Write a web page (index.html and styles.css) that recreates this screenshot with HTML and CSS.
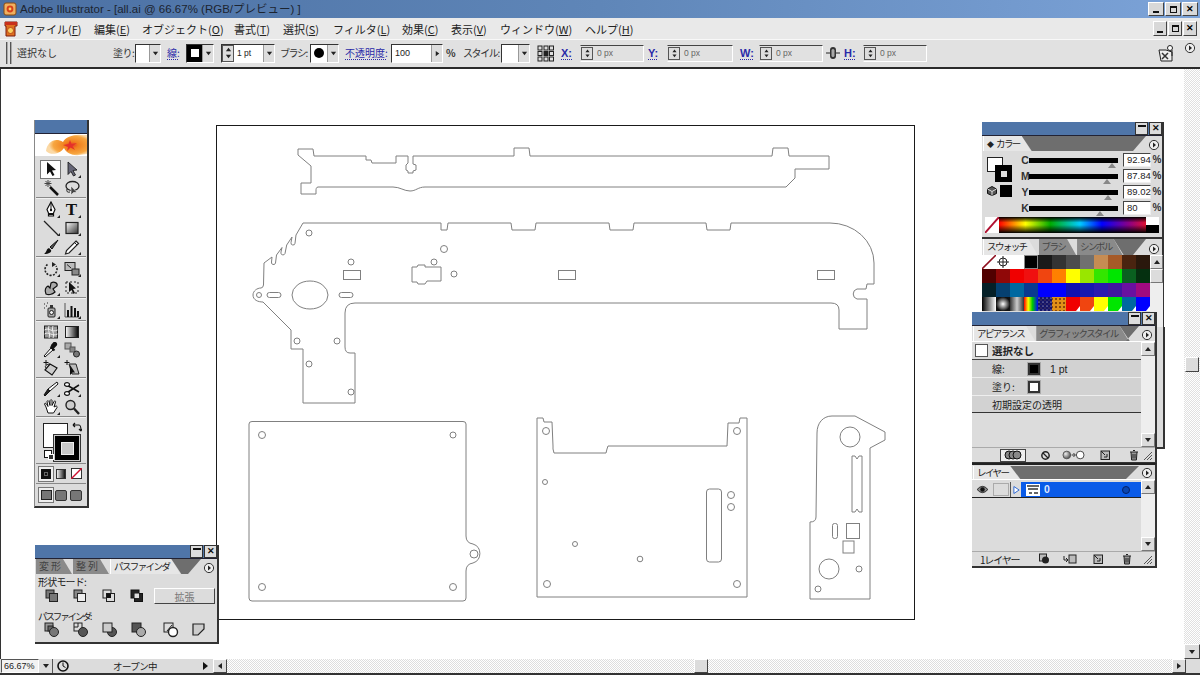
FILE: index.html
```html
<!DOCTYPE html>
<html lang="ja">
<head>
<meta charset="utf-8">
<title>Adobe Illustrator</title>
<link rel="stylesheet" href="styles.css">
</head>
<body>
<svg class="defs" width="0" height="0">
  <defs>
    <linearGradient id="gGrey" x1="0" y1="0" x2="1" y2="1"><stop offset="0" stop-color="#fff"/><stop offset="1" stop-color="#333"/></linearGradient>
    <linearGradient id="gH" x1="0" y1="0" x2="1" y2="0"><stop offset="0" stop-color="#fff"/><stop offset="1" stop-color="#000"/></linearGradient>
    <radialGradient id="gBall" cx=".35" cy=".35" r=".8"><stop offset="0" stop-color="#eee"/><stop offset="1" stop-color="#333"/></radialGradient>
    <radialGradient id="gFlower" cx=".62" cy=".5" r=".55"><stop offset="0" stop-color="#e8322a"/><stop offset=".3" stop-color="#f0801e"/><stop offset=".8" stop-color="#f7a640"/><stop offset="1" stop-color="#fbd9a6"/></radialGradient>
    <symbol id="up" viewBox="0 0 8 8"><path d="M4 2 L7 6 H1 Z" fill="#222"/></symbol>
    <symbol id="down" viewBox="0 0 8 8"><path d="M1 2 H7 L4 6 Z" fill="#222"/></symbol>
    <symbol id="menuDot" viewBox="0 0 12 12"><circle cx="6" cy="6" r="4.6" fill="#eee" stroke="#333"/><path d="M5 3.5 L8 6 L5 8.5 Z" fill="#222"/></symbol>
    <symbol id="trash" viewBox="0 0 12 12"><path d="M2 3 H10 M5 1.5 H7 M3 3 L3.6 11 H8.4 L9 3" fill="#999" stroke="#222"/><path d="M5 5 V9.5 M7 5 V9.5" stroke="#222"/></symbol>
    <symbol id="newl" viewBox="0 0 12 12"><rect x="2" y="2" width="8.5" height="8.5" fill="#bbb" stroke="#222"/><path d="M2 2 L6 6 M5 8 L8 8 L8 5" stroke="#222" fill="none"/></symbol>
    <symbol id="grip" viewBox="0 0 12 12"><path d="M11 3 L3 11 M11 6 L6 11 M11 9 L9 11" stroke="#555" fill="none"/></symbol>
  </defs>
</svg>
<div class="app">
  <header class="titlebar">
    <svg class="app-icon" viewBox="0 0 14 14" width="14" height="14"><rect x="1" y="1" width="12" height="12" rx="2" fill="#f0b060" stroke="#8a4a10"/><circle cx="7" cy="7" r="3.4" fill="#d8401c"/><circle cx="7" cy="7" r="1.4" fill="#ffd060"/></svg>
    <span class="title-text">Adobe Illustrator - [all.ai @ 66.67% (RGB/プレビュー) ]</span>
    <div class="winbtns">
      <button class="wbtn"><span class="g-min"></span></button>
      <button class="wbtn"><span class="g-res"></span></button>
      <button class="wbtn">✕</button>
    </div>
  </header>
  <nav class="menubar">
    <svg class="doc-icon" viewBox="0 0 16 18" width="16" height="18"><path d="M2 2 H14 V6 H12 V16 H3 V6 H2 Z" fill="#e07020" stroke="#7a1c10"/><rect x="2" y="2" width="12" height="3" fill="#c8301c"/><circle cx="7.5" cy="10.5" r="3" fill="#fad060" stroke="#a83010" stroke-width=".7"/></svg>
    <ul class="menus">
      <li class="m1">ファイル(<u>F</u>)</li>
      <li class="m2">編集(<u>E</u>)</li>
      <li class="m3">オブジェクト(<u>O</u>)</li>
      <li class="m4">書式(<u>T</u>)</li>
      <li class="m5">選択(<u>S</u>)</li>
      <li class="m6">フィルタ(<u>L</u>)</li>
      <li class="m7">効果(<u>C</u>)</li>
      <li class="m8">表示(<u>V</u>)</li>
      <li class="m9">ウィンドウ(<u>W</u>)</li>
      <li class="m10">ヘルプ(<u>H</u>)</li>
    </ul>
    <div class="winbtns docbtns">
      <button class="wbtn"><span class="g-min"></span></button>
      <button class="wbtn"><span class="g-res"></span></button>
      <button class="wbtn">✕</button>
    </div>
  </nav>
  <div class="controlbar">
    <div class="grips"><i></i><i></i></div>
    <span class="lbl w96">選択なし</span>
    <span class="lbl tight w22">塗り:</span>
    <div class="combo w26"><span class="sw sw-white"></span><span class="drop"><svg width="7" height="7"><use href="#down"/></svg></span></div>
    <span class="lbl link ml6 w19">線:</span>
    <div class="combo w28"><span class="sw sw-stroke"><b></b></span><span class="drop"><svg width="7" height="7"><use href="#down"/></svg></span></div>
    <div class="combo ml7 w54">
      <span class="spin"><svg width="7" height="7"><use href="#up"/></svg><svg width="7" height="7"><use href="#down"/></svg></span>
      <span class="val">1 pt</span><span class="drop"><svg width="7" height="7"><use href="#down"/></svg></span>
    </div>
    <span class="lbl kana ml5 w30">ブラシ:</span>
    <div class="combo w29"><span class="sw sw-white sw-dot"><b></b></span><span class="drop"><svg width="7" height="7"><use href="#down"/></svg></span></div>
    <span class="lbl link ml6 w46">不透明度:</span>
    <div class="combo w52"><span class="val val-op">100</span><span class="drop"><svg width="7" height="7"><use href="#up" class="rot"/></svg></span></div>
    <span class="lbl pct ml3 w17">%</span>
    <span class="lbl kana w38">スタイル:</span>
    <div class="combo w29"><span class="sw sw-white"></span><span class="drop"><svg width="7" height="7"><use href="#down"/></svg></span></div>
    <svg class="ml7 w17" viewBox="0 0 17 17" height="17"><g fill="#ddd" stroke="#222"><rect x="1" y="1" width="4" height="4"/><rect x="7" y="1" width="4" height="4"/><rect x="12.5" y="1" width="4" height="4"/><rect x="1" y="6.5" width="4" height="4"/><rect x="7" y="6.5" width="4" height="4" fill="#222"/><rect x="12.5" y="6.5" width="4" height="4"/><rect x="1" y="12" width="4" height="4"/><rect x="7" y="12" width="4" height="4"/><rect x="12.5" y="12" width="4" height="4"/></g></svg>
    <span class="lbl link bold ml7 w19">X:</span>
    <div class="field w64"><span class="spin"><svg width="7" height="7"><use href="#up"/></svg><svg width="7" height="7"><use href="#down"/></svg></span><span class="px">0 px</span></div>
    <span class="lbl link bold ml4 w19">Y:</span>
    <div class="field w66"><span class="spin"><svg width="7" height="7"><use href="#up"/></svg><svg width="7" height="7"><use href="#down"/></svg></span><span class="px">0 px</span></div>
    <span class="lbl link bold ml7 w19">W:</span>
    <div class="field w64"><span class="spin"><svg width="7" height="7"><use href="#up"/></svg><svg width="7" height="7"><use href="#down"/></svg></span><span class="px">0 px</span></div>
    <svg class="ml3 w14" viewBox="0 0 14 14" height="14"><path d="M0 7 H14" stroke="#222"/><rect x="4" y="1" width="6" height="12" rx="3" fill="#333"/><rect x="5.5" y="3" width="3" height="8" rx="1.5" fill="#aaa"/></svg>
    <span class="lbl link bold ml4 w19">H:</span>
    <div class="field w64"><span class="spin"><svg width="7" height="7"><use href="#up"/></svg><svg width="7" height="7"><use href="#down"/></svg></span><span class="px">0 px</span></div>
    <svg class="tb-doc" viewBox="0 0 18 18" width="18" height="18"><path d="M2 6 H9 L15 8 V17 H4 Z" fill="#eee" stroke="#222"/><path d="M5 9 L11 15 M5 15 L11 9" stroke="#333" stroke-width="1.5"/><circle cx="13" cy="4" r="2.5" fill="#fff" stroke="#222"/><path d="M15 6 V12" stroke="#222"/></svg>
    <svg class="tb-menu" width="12" height="12"><use href="#menuDot"/></svg>
  </div>
  <div class="workarea">
    <main class="canvas">
      <svg class="drawing" viewBox="0 69 1184 590" width="1184" height="590">
        <rect class="artboard" x="216.5" y="125.5" width="698" height="494"/>
        <g class="cut">
          <path d="M298 149 H313 L314 156 H366 V160 H371 L372 163 H396 V156 H408 V163 L406 165 V170 L408 171 V173 H413 V171 L416 170 V165 L413 164 V156 H514 V148 H529 L530 156 H772 L773 148 H788 L789 156 H829 V169 H795 V178 L786 187 H425 C418 187 416 191 410 191 C404 191 400 187 393 187 H318 C316 187 316 190 316 190 V194 H301 V183 H311 V166 L298 155 Z"/>
          <path d="M303 223 H441 V230 H447 L448 223 H511 L512 230 H535 L536 223 H609 L610 230 H633 L634 223 H706 L707 230 H730 L731 223 H830 A44 40 0 0 1 874 263 V284 H867 L866 289 H857 A5.2 5.2 0 0 0 857 299 H867 V329 H839 V310 Q839 303 831 303 H355 Q345 303 345 313 V347 Q345 353 350 353 H355 V403 H303 V349 H291 V330 L263 302 C258 302 253 300 253 295 C253 291 257 288 261 288 Q263 288 263.500 285 L264 263 L272 257 L271.500 262 A2 2 0 0 0 275.500 263 L276.500 255 L282 247.500 L281 252 A2 2 0 0 0 285 253.500 L286.700 245 L292 237 L291 242.700 A2 2 0 0 0 295 243.300 L296 235 Z"/>
          <path d="M412 267 H417 L418 265 H425 V267 H441 V281 H427 L425 284 H418 L417 282 H412 Z"/>
          <rect x="343.500" y="270.500" width="17" height="9"/>
          <rect x="558.500" y="270.500" width="17" height="9"/>
          <rect x="817.500" y="270.500" width="17" height="9"/>
          <ellipse cx="310" cy="295" rx="18" ry="14"/>
          <rect x="267" y="292.500" width="14" height="5" rx="2.500"/>
          <rect x="339" y="292.500" width="14" height="5" rx="2.500"/>
          <circle cx="259" cy="295" r="2.500"/><circle cx="309" cy="233" r="3"/><circle cx="444" cy="249" r="3.500"/><circle cx="434" cy="262" r="3"/><circle cx="454" cy="274" r="3"/><circle cx="351" cy="262" r="3"/><circle cx="297" cy="341" r="3"/><circle cx="337" cy="341" r="3"/><circle cx="309" cy="364" r="3"/><circle cx="351" cy="392" r="3"/>
          <path d="M252 421.500 H463 Q466 421.500 466 424 V536 Q466 543 473 544 A10 10 0 0 1 473 563 Q466 564 466 571 V598 Q466 601 463 601 H252 Q249 601 249 598 V424 Q249 421.500 252 421.500 Z"/>
          <circle cx="474" cy="554" r="4"/><circle cx="262" cy="435" r="3.500"/><circle cx="453" cy="435" r="3"/><circle cx="262" cy="587" r="3.500"/><circle cx="453" cy="587" r="3.500"/>
          <path d="M537 418 H543 L544 422 H552 L553 446 L553 449 L554 453 H606 L607 449 L608 446 H727 L728 423 H739 L740 418 H747 V597 H537 Z"/>
          <circle cx="546" cy="431" r="3.500"/><circle cx="737" cy="431" r="3.500"/><circle cx="545" cy="482" r="2.500"/><circle cx="575" cy="544" r="2.500"/><circle cx="640" cy="559" r="2.800"/><circle cx="547" cy="584" r="3.500"/><circle cx="737" cy="584" r="3.500"/><circle cx="731" cy="495" r="3.500"/><circle cx="731" cy="507" r="3.500"/>
          <rect x="706.500" y="489" width="15" height="73" rx="3"/>
          <path d="M817 433 C817 423 823 416 832 416 H855 L885 432 V440 L870 448 V599 H810 V522 Q816 522 816 517 Z"/>
          <circle cx="850" cy="437" r="10"/><circle cx="829" cy="569" r="10"/><circle cx="859" cy="569" r="3"/><circle cx="818" cy="589" r="3"/>
          <path d="M852 456 L855 456 L857 459 L859 456 L862 456 V512 H859 L857 509 L855 512 H852 Z"/>
          <rect x="832.500" y="523.500" width="5" height="15" rx="2"/>
          <rect x="846.500" y="523.500" width="13" height="15"/>
          <rect x="843" y="541" width="11" height="12"/>
        </g>
      </svg>
    </main>
    <div class="vscroll">
      <span class="vthumb"></span>
      <span class="vdown"><svg width="8" height="8"><use href="#down"/></svg></span>
    </div>
    <section class="panel tools">
      <div class="ptitle"></div>
      <div class="tool-logo"><svg viewBox="0 0 52 22" width="52" height="22" preserveAspectRatio="none"><rect width="52" height="22" fill="#fff"/><path d="M11 17 C12 8 20 3 28 8 C30 3 40 0 46 1 L52 1 V20 L44 21 C38 22 31 19 29 14 C25 20 16 22 11 17 Z" fill="url(#gFlower)"/><path d="M35 6 L36.500 10 L42 9 L37.500 12 L40 16 L35.500 13.500 L32 17 L33 13 L28 11 L33.500 10 Z" fill="#e5322a"/></svg></div>
      <div class="tgroup g1">
        <span class="t on"><svg viewBox="0 0 16 16"><path d="M4 1 V13.500 L7 10.500 L9.500 15 L11.500 14 L9 9.500 L13 9 Z" fill="#111"/></svg></span>
        <span class="t fly"><svg viewBox="0 0 16 16"><path d="M4 1 V13.500 L7 10.500 L9.500 15 L11.500 14 L9 9.500 L13 9 Z" fill="#667" stroke="#111" stroke-width=".8"/></svg></span>
        <span class="t"><svg viewBox="0 0 16 16"><path d="M7 7 L15 15" stroke="#111" stroke-width="2.500"/><path d="M5 0 V7 M1.500 3.500 H8.500 M2.500 1 L7.500 6 M7.500 1 L2.500 6" stroke="#444"/></svg></span>
        <span class="t"><svg viewBox="0 0 16 16"><ellipse cx="8.500" cy="6" rx="6.500" ry="4.500" fill="none" stroke="#222" stroke-width="1.300"/><path d="M3 9 Q2 13 6 12" fill="none" stroke="#222"/><path d="M7 6 V15 L9.500 12.500 H13 Z" fill="#444" stroke="#fff" stroke-width=".5"/></svg></span>
      </div>
      <div class="tgroup g2">
        <span class="t fly"><svg viewBox="0 0 16 16"><path d="M8 1 L12 8.500 L10.500 12 V15 H5.500 V12 L4 8.500 Z" fill="#fff" stroke="#111" stroke-width="1.200"/><path d="M8 1 V8" stroke="#111"/><circle cx="8" cy="9" r="1.200" fill="#111"/><path d="M5.500 13 H10.500" stroke="#111" stroke-width="2"/></svg></span>
        <span class="t fly t-type">T</span>
        <span class="t fly"><svg viewBox="0 0 16 16"><path d="M1 1 L15 15" stroke="#222" stroke-width="1.300"/></svg></span>
        <span class="t fly"><svg viewBox="0 0 16 16"><rect x="2" y="2.500" width="12" height="11" fill="url(#gGrey)" stroke="#222" stroke-width="1.200"/></svg></span>
        <span class="t"><svg viewBox="0 0 16 16"><path d="M15 1 L7 8 L9 10 Z" fill="#555" stroke="#111"/><path d="M6 9 C3 10 4 13 1 15 C6 15 9 13 8 11 Z" fill="#111"/></svg></span>
        <span class="t fly"><svg viewBox="0 0 16 16"><path d="M12 2 L14.500 4.500 L5 14 L1.500 15 L2.500 11.500 Z" fill="#fff" stroke="#222" stroke-width="1.200"/><path d="M10.500 3.500 L13 6" stroke="#222"/></svg></span>
      </div>
      <div class="tgroup g3">
        <span class="t fly"><svg viewBox="0 0 16 16"><path d="M4.500 3.500 A6 6 0 1 0 13 5" fill="none" stroke="#222" stroke-width="1.600" stroke-dasharray="2 1.300"/><path d="M9 1 L13 3.500 L9 6 Z" fill="#222"/></svg></span>
        <span class="t fly"><svg viewBox="0 0 16 16"><rect x="1" y="1.500" width="10" height="8" fill="#bbb" stroke="#222"/><rect x="8" y="8" width="7" height="6" fill="#888" stroke="#222"/><path d="M3 3.500 L7 7" stroke="#222"/></svg></span>
        <span class="t fly"><svg viewBox="0 0 16 16"><path d="M3 14 C1 10 3 7 5 6 L7 8 L8 3 C11 1 15 3 14 6 L10 9 L12 12 C9 15 5 15 3 14 Z" fill="#aaa" stroke="#111" stroke-width="1.200"/></svg></span>
        <span class="t"><svg viewBox="0 0 16 16"><rect x="2" y="2" width="12" height="11" fill="none" stroke="#222" stroke-dasharray="2 2"/><path d="M5 2 V12 L7.500 10 L9.500 14 L11 13 L9 9 L12 8.500 Z" fill="#111"/></svg></span>
      </div>
      <div class="tgroup g4">
        <span class="t fly"><svg viewBox="0 0 16 16"><rect x="5" y="6" width="7" height="9" rx="1" fill="#aaa" stroke="#222"/><rect x="7" y="3" width="3" height="3" fill="#333"/><circle cx="8.500" cy="10.500" r="2" fill="#eee" stroke="#222"/><path d="M1 2 H2 M3 4 H4 M1 6 H2 M4 1 H5" stroke="#222"/></svg></span>
        <span class="t fly"><svg viewBox="0 0 16 16"><path d="M1 15 V1 M1 15 H15" stroke="#555"/><path d="M3 15 V8 H5 V15 Z M6.500 15 V4 H8.500 V15 Z M10 15 V6 H12 V15 Z M13 15 V9 H15 V15 Z" fill="#111"/></svg></span>
      </div>
      <div class="tgroup g5">
        <span class="t"><svg viewBox="0 0 16 16"><rect x="1.500" y="2" width="13" height="12" fill="#999" stroke="#222"/><path d="M1.500 6 C6 3 9 9 14.500 6 M1.500 10 C6 7 9 13 14.500 10 M6 2 C4 6 8 10 6 14 M10 2 C8 6 12 10 10 14" fill="none" stroke="#eee"/></svg></span>
        <span class="t"><svg viewBox="0 0 16 16"><rect x="1.500" y="2.500" width="13" height="11" fill="url(#gH)" stroke="#222"/></svg></span>
        <span class="t fly"><svg viewBox="0 0 16 16"><path d="M2 15 L1 14 L8 6 L10 8 Z" fill="#fff" stroke="#111"/><path d="M7.500 4.500 L11.500 8.500 M10 6 L13 3 A1.500 1.500 0 0 0 11 1 L8.500 4" fill="#111" stroke="#111" stroke-width="2"/></svg></span>
        <span class="t"><svg viewBox="0 0 16 16"><rect x="1" y="1" width="6" height="6" fill="#aaa" stroke="#555"/><rect x="6" y="5" width="5" height="5" fill="#888" stroke="#555"/><circle cx="12.500" cy="12" r="3" fill="#777" stroke="#222"/></svg></span>
        <span class="t"><svg viewBox="0 0 16 16"><path d="M7 4 L14 8 L9 15 L2 10 Z" fill="#ccc" stroke="#111" stroke-width="1.200"/><path d="M3 8 C1 6 4 4 7 4" fill="none" stroke="#111"/><path d="M3 0 V5 M.5 2.500 H5.500" stroke="#111"/></svg></span>
        <span class="t"><svg viewBox="0 0 16 16"><path d="M5 4 H12 L15 14 H8 Z" fill="#bbb" stroke="#222"/><path d="M6 5 V15 L8.500 12.500 L11 12.500 Z" fill="#111"/><path d="M3 0 V5 M.5 2.500 H5.500" stroke="#111"/></svg></span>
      </div>
      <div class="tgroup g6">
        <span class="t fly"><svg viewBox="0 0 16 16"><path d="M14 1 L15 3 L7 10 L5 8 Z" fill="#fff" stroke="#111"/><path d="M5 8 L7 10 L2 15 L1 14 Z" fill="#222" stroke="#111"/></svg></span>
        <span class="t fly"><svg viewBox="0 0 16 16"><path d="M1 3 L15 11 M1 13 L15 4" stroke="#111" stroke-width="1.500"/><ellipse cx="3" cy="3.500" rx="2.500" ry="1.800" fill="#fff" stroke="#111" stroke-width="1.200"/><ellipse cx="3" cy="12.500" rx="2.500" ry="1.800" fill="#fff" stroke="#111" stroke-width="1.200"/></svg></span>
        <span class="t fly"><svg viewBox="0 0 16 16"><path d="M3 8 L1.500 5 C1.500 4 3 4 3.500 5 L5 7.500 L4 2.500 C4 1.500 5.500 1.500 6 2.500 L7 6.500 V1.500 C7.500 .5 9 .5 9 1.500 V6.500 L11 2.500 C11.500 1.500 13 2 12.500 3 L11 8 L13 7 C14 7 14.500 8 14 8.500 L10.500 14 H5 Z" fill="#fff" stroke="#111"/></svg></span>
        <span class="t"><svg viewBox="0 0 16 16"><circle cx="6.500" cy="6" r="4.500" fill="#ccc" stroke="#222" stroke-width="1.400"/><path d="M10 9.500 L15 15" stroke="#222" stroke-width="2.400"/></svg></span>
      </div>
      <div class="colorbox">
        <span class="cb-fill"></span>
        <span class="cb-stroke"><b></b></span>
        <svg class="cb-swap" viewBox="0 0 10 10" width="10" height="10"><path d="M1 3 H7 Q9 3 9 9 M1 3 L3 1 M1 3 L3 5 M9 9 L7 7 M9 9 L10 7" fill="none" stroke="#111" stroke-width="1.200"/></svg>
        <span class="cb-def"><b></b></span>
      </div>
      <div class="tmodes">
        <span class="tm on"><b class="m-sq"></b></span>
        <span class="tm"><b class="m-grad"></b></span>
        <span class="tm"><svg viewBox="0 0 12 12" width="11" height="11"><rect x=".5" y=".5" width="11" height="11" fill="#fff" stroke="#222"/><path d="M0 12 L12 0" stroke="#d01030" stroke-width="1.600"/></svg></span>
      </div>
      <div class="tmodes tmodes-last">
        <span class="tm on"><b class="m-screen"></b></span>
        <span class="tm"><b class="m-btn"></b></span>
        <span class="tm"><b class="m-btn"></b></span>
      </div>
    </section>
    <section class="panel pathfinder">
      <div class="ptitle"><span class="pbtn pb-min"></span><span class="pbtn">✕</span></div>
      <div class="ptabs">
        <span class="tab off kj">変形</span><span class="tab off kj">整列</span><span class="tab act">パスファインダ</span><span class="tabfill"></span><span class="tabmenu"><svg width="12" height="12"><use href="#menuDot"/></svg></span>
      </div>
      <div class="pf-body">
        <div class="pf-lbl">形状モード:</div>
        <div class="pf-row pf-row1">
          <svg viewBox="0 0 14 14"><rect x="1" y="1" width="8" height="8" fill="#777" stroke="#222"/><rect x="4.500" y="4.500" width="8" height="8" fill="#777" stroke="#222"/></svg>
          <svg viewBox="0 0 14 14"><rect x="1" y="1" width="8" height="8" fill="#888" stroke="#222"/><rect x="4.500" y="4.500" width="8" height="8" fill="#eee" stroke="#222"/></svg>
          <svg viewBox="0 0 14 14"><rect x="1" y="1" width="8" height="8" fill="#ddd" stroke="#222"/><rect x="4.500" y="4.500" width="8" height="8" fill="#ddd" stroke="#222"/><rect x="4.500" y="4.500" width="4.500" height="4.500" fill="#111"/></svg>
          <svg viewBox="0 0 14 14"><rect x="1" y="1" width="8" height="8" fill="#222" stroke="#111"/><rect x="4.500" y="4.500" width="8" height="8" fill="#222" stroke="#111"/><rect x="4.500" y="4.500" width="4.500" height="4.500" fill="#ddd"/></svg>
          <span class="pf-btn">拡張</span>
        </div>
        <div class="pf-lbl pf-lbl2">パスファインダ:</div>
        <div class="pf-row pf-row2">
          <svg viewBox="0 0 16 16"><rect x="1" y="1" width="8" height="8" fill="#999" stroke="#222"/><rect x="4" y="4" width="5" height="5" fill="#666" stroke="#222"/><circle cx="10" cy="10" r="4.500" fill="#777" stroke="#222"/></svg>
          <svg viewBox="0 0 16 16"><rect x="1" y="1" width="8" height="8" fill="#ddd" stroke="#222"/><path d="M5 1 V5 H1" fill="none" stroke="#222"/><circle cx="10" cy="10" r="4.500" fill="#555" stroke="#222"/></svg>
          <svg viewBox="0 0 16 16"><circle cx="10" cy="10" r="4.500" fill="#555" stroke="#222"/><rect x="1" y="1" width="9" height="9" fill="#ccc" stroke="#222"/></svg>
          <svg viewBox="0 0 16 16"><rect x="1" y="1" width="9" height="9" fill="#555" stroke="#222"/><circle cx="10" cy="10" r="4.500" fill="#aaa" stroke="#222"/></svg>
          <svg viewBox="0 0 16 16"><rect x="1" y="1" width="9" height="9" fill="#ddd" stroke="#222"/><circle cx="10" cy="10" r="4.500" fill="#fff" stroke="#222" stroke-width="1.400"/><path d="M4 9 L9 3" stroke="#222"/></svg>
          <svg viewBox="0 0 16 16"><path d="M2 2 H13 V7 L7 13 H2 Z" fill="#ccc" stroke="#222" stroke-width="1.200"/></svg>
        </div>
      </div>
    </section>
    <section class="panel color">
      <div class="ptitle"><span class="pbtn pb-min"></span><span class="pbtn">✕</span></div>
      <div class="ptabs">
        <span class="tab act"><i class="diamond">◆</i>カラー</span><span class="tabfill"></span><span class="tabmenu"><svg width="12" height="12"><use href="#menuDot"/></svg></span>
      </div>
      <div class="color-body">
        <div class="color-left">
          <span class="cl-fill"></span><span class="cl-stroke"><b></b></span>
          <svg class="cl-cube" viewBox="0 0 10 10" width="10" height="10"><path d="M5 .5 L9.500 3 V7.500 L5 9.500 L.5 7.500 V3 Z" fill="#555" stroke="#111"/><path d="M.5 3 L5 5.500 L9.500 3 M5 5.500 V9.500" stroke="#ddd" fill="none"/></svg>
          <span class="cl-black"></span>
        </div>
        <div class="sliders">
          <div class="srow"><b>C</b><span class="track"><i class="tri tri-c"></i></span><span class="num">92.94</span><em>%</em></div>
          <div class="srow"><b>M</b><span class="track"><i class="tri tri-m"></i></span><span class="num">87.84</span><em>%</em></div>
          <div class="srow"><b>Y</b><span class="track"><i class="tri tri-y"></i></span><span class="num">89.02</span><em>%</em></div>
          <div class="srow"><b>K</b><span class="track"><i class="tri tri-k"></i></span><span class="num num-on">80</span><em>%</em></div>
        </div>
      </div>
      <div class="spectrum">
        <svg class="spec-none" viewBox="0 0 14 15" preserveAspectRatio="none"><rect width="14" height="15" fill="#fff"/><path d="M0 15 L14 0" stroke="#b01030" stroke-width="1.800"/></svg>
        <span class="spec-bar"></span>
        <span class="spec-wb"></span>
      </div>
      <div class="ptabs tabs2">
        <span class="tab act">スウォッチ</span><span class="tab off">ブラシ</span><span class="tab off">シンボル</span><span class="tabfill"></span><span class="tabmenu"><svg width="12" height="12"><use href="#menuDot"/></svg></span>
      </div>
      <div class="swatches">
        <svg class="sw-grid" viewBox="0 0 168 56" width="168" height="56">
          <defs>
            <linearGradient id="s1"><stop offset="0" stop-color="#000"/><stop offset="1" stop-color="#fff"/></linearGradient>
            <radialGradient id="s2"><stop offset="0" stop-color="#fff"/><stop offset="1" stop-color="#111"/></radialGradient>
            <linearGradient id="s3"><stop offset="0" stop-color="#333"/><stop offset=".5" stop-color="#ccc"/><stop offset="1" stop-color="#333"/></linearGradient>
            <linearGradient id="s4"><stop offset="0" stop-color="#f00"/><stop offset=".3" stop-color="#ff0"/><stop offset=".6" stop-color="#0c0"/><stop offset="1" stop-color="#00f"/></linearGradient>
            <pattern id="s5" width="4" height="4" patternUnits="userSpaceOnUse"><rect width="4" height="4" fill="#14146a"/><circle cx="1" cy="1" r=".6" fill="#eee"/><circle cx="3" cy="3" r=".4" fill="#da3"/></pattern>
            <pattern id="s6" width="4" height="4" patternUnits="userSpaceOnUse"><rect width="4" height="4" fill="#e09018"/><circle cx="2" cy="2" r="1" fill="#6a3008"/></pattern>
          </defs>
          <g>
            <rect x="0" width="14" height="14" fill="#fff"/><path d="M0 14 L14 0" stroke="#901020" stroke-width="1.600"/>
            <rect x="14" width="14" height="14" fill="#fff"/><circle cx="21" cy="7" r="4" fill="none" stroke="#222"/><path d="M15 7 H27 M21 1 V13" stroke="#222"/>
            <rect x="28" width="14" height="14" fill="#fff"/>
            <rect x="42.500" y=".5" width="13" height="13" fill="#000" stroke="#888"/>
            <rect x="56" width="14" height="14" fill="#1a1a1a"/><rect x="70" width="14" height="14" fill="#333"/><rect x="84" width="14" height="14" fill="#4d4d4d"/><rect x="98" width="14" height="14" fill="#707070"/><rect x="112" width="14" height="14" fill="#c68c53"/><rect x="126" width="14" height="14" fill="#a65a28"/><rect x="140" width="14" height="14" fill="#4a2410"/><rect x="154" width="14" height="14" fill="#2a180c"/>
          </g>
          <g transform="translate(0 14)">
            <rect x="0" width="14" height="14" fill="#500000"/><rect x="14" width="14" height="14" fill="#900808"/><rect x="28" width="14" height="14" fill="#f00000"/><rect x="42" width="14" height="14" fill="#f01010"/><rect x="56" width="14" height="14" fill="#f04510"/><rect x="70" width="14" height="14" fill="#ff8000"/><rect x="84" width="14" height="14" fill="#ffff00"/><rect x="98" width="14" height="14" fill="#99e600"/><rect x="112" width="14" height="14" fill="#33e600"/><rect x="126" width="14" height="14" fill="#00e600"/><rect x="140" width="14" height="14" fill="#0a6020"/><rect x="154" width="14" height="14" fill="#053010"/>
          </g>
          <g transform="translate(0 28)">
            <rect x="0" width="14" height="14" fill="#052028"/><rect x="14" width="14" height="14" fill="#064070"/><rect x="28" width="14" height="14" fill="#0068a0"/><rect x="42" width="14" height="14" fill="#0a3a90"/><rect x="56" width="14" height="14" fill="#0000ff"/><rect x="70" width="14" height="14" fill="#0000ff"/><rect x="84" width="14" height="14" fill="#1010b0"/><rect x="98" width="14" height="14" fill="#1818b0"/><rect x="112" width="14" height="14" fill="#2a1ab0"/><rect x="126" width="14" height="14" fill="#4015a0"/><rect x="140" width="14" height="14" fill="#6a10a0"/><rect x="154" width="14" height="14" fill="#a00a80"/>
          </g>
          <g transform="translate(0 42)">
            <rect x="0" width="14" height="14" fill="url(#s1)"/><rect x="14" width="14" height="14" fill="url(#s2)"/><rect x="28" width="14" height="14" fill="url(#s3)"/><rect x="42" width="14" height="14" fill="url(#s4)"/><rect x="56" width="14" height="14" fill="url(#s5)"/><rect x="70" width="14" height="14" fill="url(#s6)"/>
            <rect x="84" width="14" height="14" fill="#f00000"/><path d="M94 14 L98 9 V14 Z" fill="#fff"/>
            <rect x="98" width="14" height="14" fill="#f04510"/><path d="M108 14 L112 9 V14 Z" fill="#fff"/>
            <rect x="112" width="14" height="14" fill="#ffff00"/><path d="M122 14 L126 9 V14 Z" fill="#fff"/>
            <rect x="126" width="14" height="14" fill="#00e600"/><path d="M136 14 L140 9 V14 Z" fill="#fff"/>
            <rect x="140" width="14" height="14" fill="#0068a0"/><path d="M150 14 L154 9 V14 Z" fill="#fff"/>
            <rect x="154" width="14" height="14" fill="#0000ff"/><path d="M164 14 L168 9 V14 Z" fill="#fff"/>
          </g>
        </svg>
        <div class="pscroll">
          <span class="psb"><svg width="8" height="8"><use href="#up"/></svg></span>
          <span class="psthumb"></span>
          <span class="psgap"></span>
          <span class="psb"><svg width="8" height="8"><use href="#down"/></svg></span>
        </div>
      </div>
    </section>
    <section class="panel hidden-panel"></section>
    <section class="panel appearance">
      <div class="ptitle"><span class="pbtn pb-min"></span><span class="pbtn">✕</span></div>
      <div class="ptabs">
        <span class="tab act">アピアランス</span><span class="tab off">グラフィックスタイル</span><span class="tabfill"></span><span class="tabmenu"><svg width="12" height="12"><use href="#menuDot"/></svg></span>
      </div>
      <div class="list-wrap ap-wrap">
        <div class="ap-list">
          <div class="ap-row ap-head"><span class="ap-box"></span><b>選択なし</b></div>
          <div class="ap-row ap-sub"><span class="ap-k">線:</span><span class="ap-sw ap-black"></span><span class="ap-v">1 pt</span></div>
          <div class="ap-row ap-sub"><span class="ap-k">塗り:</span><span class="ap-sw"></span></div>
          <div class="ap-row ap-sub ap-last"><span>初期設定の透明</span></div>
        </div>
        <div class="pscroll">
          <span class="psb"><svg width="8" height="8"><use href="#up"/></svg></span>
          <span class="psgap"></span>
          <span class="psb"><svg width="8" height="8"><use href="#down"/></svg></span>
        </div>
      </div>
      <div class="pfoot">
        <span class="ap-f1"><svg viewBox="0 0 20 10" width="20" height="10"><circle cx="6" cy="5" r="4" fill="#888" stroke="#111"/><circle cx="10" cy="5" r="4" fill="#888" stroke="#111"/><circle cx="14" cy="5" r="4" fill="#888" stroke="#111"/></svg></span>
        <svg class="ap-f2" viewBox="0 0 12 12" width="11" height="11"><circle cx="6" cy="6" r="4" fill="none" stroke="#222" stroke-width="1.600"/><path d="M3 3 L9 9" stroke="#222" stroke-width="1.400"/></svg>
        <svg class="ap-f3" viewBox="0 0 24 12" width="23" height="12"><circle cx="5" cy="6" r="4" fill="url(#gBall)" stroke="#555"/><path d="M10 6 H13 M12 4 L14 6 L12 8" stroke="#222" fill="none"/><circle cx="19" cy="6" r="4" fill="#fff" stroke="#444"/></svg>
        <svg class="ap-f4" width="12" height="12"><use href="#newl"/></svg>
        <svg class="ap-f5" width="12" height="12"><use href="#trash"/></svg>
        <svg class="ap-f6" width="12" height="12"><use href="#grip"/></svg>
      </div>
    </section>
    <section class="panel layers">
      <div class="ptabs">
        <span class="tab act">レイヤー</span><span class="tabfill"></span><span class="tabmenu"><svg width="12" height="12"><use href="#menuDot"/></svg></span>
      </div>
      <div class="list-wrap ly-wrap">
        <div class="ly-list">
          <div class="ly-row">
            <span class="ly-eye"><svg viewBox="0 0 14 10" width="13" height="9"><path d="M1 5 Q7 -2 13 5 Q7 12 1 5 Z" fill="#888" stroke="#222"/><circle cx="7" cy="5" r="2.500" fill="#111"/></svg></span>
            <span class="ly-lock"></span>
            <span class="ly-arrow"><svg viewBox="0 0 8 10" width="7" height="10"><path d="M1 1 L7 5 L1 9 Z" fill="#fff" stroke="#1a5ad0"/></svg></span>
            <span class="ly-main">
              <svg viewBox="0 0 14 12" width="14" height="12"><rect width="14" height="12" fill="#fff"/><path d="M1 2 H13 M2 5 H12 M3 9 H6 M8 9 H12" stroke="#333" stroke-width="1.600"/></svg>
              <b>0</b>
              <i class="ly-dot"></i>
            </span>
          </div>
        </div>
        <div class="pscroll">
          <span class="psb"><svg width="8" height="8"><use href="#up"/></svg></span>
          <span class="psgap"></span>
          <span class="psb"><svg width="8" height="8"><use href="#down"/></svg></span>
        </div>
      </div>
      <div class="pfoot ly-foot">
        <span class="ly-count">1レイヤー</span>
        <svg class="ly-f1" viewBox="0 0 12 12" width="13" height="12"><rect x="1" y="1" width="7" height="7" fill="#bbb" stroke="#222"/><circle cx="7" cy="7" r="3.500" fill="#222"/></svg>
        <svg class="ly-f2" viewBox="0 0 14 12" width="14" height="12"><path d="M1 3 V7 H4 M3 5 L5 7 L3 9" fill="none" stroke="#222"/><rect x="6" y="2" width="7" height="8" fill="#bbb" stroke="#222"/></svg>
        <svg class="ly-f3" width="12" height="12"><use href="#newl"/></svg>
        <svg class="ly-f4" width="12" height="12"><use href="#trash"/></svg>
        <svg class="ly-f5" width="12" height="12"><use href="#grip"/></svg>
      </div>
    </section>
  </div>
  <footer class="statusbar">
    <span class="zoomval">66.67%</span>
    <span class="zoomdrop"><svg width="8" height="8"><use href="#down"/></svg></span>
    <svg class="st-icon" viewBox="0 0 12 12" width="12" height="12"><circle cx="6" cy="6" r="5" fill="#ddd" stroke="#111" stroke-width="1.600"/><path d="M6 2.500 V6 L8.500 7.500" stroke="#111" fill="none"/></svg>
    <span class="st-text">オープン中</span>
    <span class="st-arrow"></span>
    <span class="hbtn"><svg width="8" height="8" class="flip"><use href="#up"/></svg></span>
    <span class="htrack"><span class="hthumb"></span></span>
    <span class="hbtn"><svg width="8" height="8"><use href="#up" class="rot"/></svg></span>
    <span class="corner"></span>
  </footer>
</div>
</body>
</html>
```
FILE: styles.css
```css
* { box-sizing: border-box; margin: 0; padding: 0; }
html, body { width: 1200px; height: 675px; overflow: hidden; background: #fff; }
body { font-family: "Noto Sans CJK JP", "Liberation Sans", sans-serif; font-size: 10px; color: #222; }
.defs { position: absolute; }
button { font: inherit; }
ul { list-style: none; }

.app { display: flex; flex-direction: column; width: 1200px; height: 675px; }

/* Title bar */
.titlebar { flex: none; height: 18px; display: flex; align-items: center; padding-left: 3px; background: linear-gradient(90deg, #4b70a3 0%, #5f86b8 50%, #7ca3d8 100%); }
.app-icon { margin-right: 3px; }
.title-text { font-family: "Liberation Sans", "Noto Sans CJK JP", sans-serif; font-size: 11.5px; color: #1c2430; line-height: 18px; }
.winbtns { margin-left: auto; margin-right: 2px; display: flex; gap: 1px; }
.wbtn { width: 16px; height: 14px; display: flex; align-items: center; justify-content: center; font-size: 9px; font-weight: 700; line-height: 1; color: #000; background: #d8d8d8; border: 1px solid; border-color: #fff #444 #444 #fff; font-family: "Liberation Sans", sans-serif; }
.g-min { width: 6px; height: 2px; background: #111; margin-top: 6px; }
.g-res { width: 7px; height: 7px; border: 1px solid #111; border-top-width: 2px; }

/* Menu bar */
.menubar { flex: none; height: 22px; display: flex; align-items: center; background: #e9e9e9; padding-left: 3px; border-bottom: 1px solid #f8f8f8; }
.doc-icon { flex: none; }
.menus { display: flex; font-size: 11px; line-height: 22px; color: #222; }
.menus li { flex: none; }
.m1 { width: 70px; margin-left: 5px; }
.m2 { width: 48px; }
.m3 { width: 92px; }
.m4 { width: 49px; }
.m5 { width: 50px; }
.m6 { width: 69px; }
.m7 { width: 49px; }
.m8 { width: 49px; }
.m9 { width: 85px; }
.docbtns { margin-right: 3px; }
.docbtns .wbtn { width: 14px; height: 15px; }

/* Control bar */
.controlbar { flex: none; height: 29px; display: flex; align-items: center; padding: 0 0 1px 5px; background: #e1e1e1; border-bottom: 2px solid #2a2a2a; font-size: 10px; position: relative; }
.controlbar > * { flex: none; }
.grips { width: 12px; height: 22px; display: flex; gap: 2px; padding-left: 1px; }
.grips i { width: 2px; height: 22px; background: #555; border-right: 1px solid #aaa; }
.lbl { display: block; line-height: 16px; color: #333; white-space: nowrap; }
.tight { letter-spacing: -.5px; }
.kana { letter-spacing: -1.4px; }
.link { color: #2a2aa8; text-decoration: underline dotted; text-underline-offset: 2px; }
.bold { font-family: "Liberation Sans", sans-serif; font-weight: 700; font-size: 11px; }
.pct { font-weight: 700; }
.w14 { width: 14px; } .w17 { width: 17px; } .w19 { width: 19px; } .w22 { width: 22px; } .w26 { width: 26px; } .w28 { width: 28px; } .w29 { width: 29px; } .w30 { width: 30px; } .w38 { width: 38px; } .w46 { width: 46px; } .w52 { width: 52px; } .w54 { width: 54px; } .w64 { width: 64px; } .w66 { width: 66px; } .w96 { width: 96px; }
.ml3 { margin-left: 3px; } .ml4 { margin-left: 4px; } .ml5 { margin-left: 5px; } .ml6 { margin-left: 6px; } .ml7 { margin-left: 7px; }
.combo { height: 19px; display: flex; align-items: stretch; border: 1px solid; border-color: #333 #fff #fff #333; background: #fff; }
.sw { flex: 1; display: flex; align-items: center; justify-content: center; }
.sw-white { background: #fff; }
.sw-stroke { background: #000; }
.sw-stroke b { width: 8px; height: 8px; background: #fff; }
.sw-dot b { width: 10px; height: 10px; background: #000; border-radius: 50%; }
.drop { width: 11px; flex: none; display: flex; align-items: center; justify-content: center; background: #ddd; border-left: 1px solid #999; margin-left: auto; }
.rot { transform: rotate(90deg); transform-origin: center; transform-box: fill-box; }
.flip { transform: rotate(-90deg); }
.spin { flex: none; width: 12px; display: flex; flex-direction: column; align-items: center; justify-content: center; background: #ddd; border: 1px solid #555; }
.val { flex: 1; padding-left: 3px; font-family: "Liberation Sans", sans-serif; font-size: 8.5px; line-height: 16px; background: #fff; }
.val-op { font-size: 9px; }
.field { height: 17px; display: flex; align-items: stretch; padding: 1px 1px 1px 0; border: 1px solid; border-color: #444 #fff #fff #e0e0e0; background: #e1e1e1; }
.field .spin { margin-right: 4px; }
.px { font-family: "Liberation Sans", sans-serif; font-size: 8.5px; line-height: 13px; color: #666; }
.tb-doc { margin-left: auto; margin-right: 9px; }
.tb-menu { margin-right: 4px; margin-bottom: 10px; }

/* Work area */
.workarea { flex: 1; min-height: 0; display: flex; position: relative; }
.canvas { flex: 1; min-width: 0; background: #fff; border-left: 1px solid #333; }
.drawing { display: block; margin-left: -1px; }
.artboard { fill: none; stroke: #1a1a1a; stroke-width: 1; }
.cut * , .cut { fill: none; stroke: #808080; stroke-width: 1; }
.vscroll { flex: none; width: 16px; display: flex; flex-direction: column; background: repeating-conic-gradient(#fff 0 25%, #e0e0e0 0 50%) 0 0 / 2px 2px; position: relative; }
.vthumb { position: absolute; top: 288px; left: 1px; width: 14px; height: 15px; background: #dcdcdc; border: 1px solid; border-color: #fff #444 #444 #fff; }
.vdown { margin-top: auto; height: 15px; display: flex; align-items: center; justify-content: center; background: #dcdcdc; border: 1px solid; border-color: #fff #444 #444 #fff; }

/* Floating panels */
.panel { position: absolute; display: flex; flex-direction: column; background: #dcdcdc; border-right: 2px solid #333; border-bottom: 2px solid #333; font-size: 10px; }
.ptitle { flex: none; height: 14px; display: flex; justify-content: flex-end; gap: 1px; background: #4f75a8; border-bottom: 1px solid #223; }
.pbtn { width: 13px; height: 13px; display: flex; align-items: center; justify-content: center; background: #dcdcdc; border: 1px solid #333; font: 700 9px/1 "Liberation Sans", sans-serif; color: #111; }
.pb-min { align-items: flex-start; padding-top: 2px; }
.pb-min::before { content: ""; width: 8px; height: 2px; background: #111; }
.ptabs { flex: none; height: 15px; display: flex; align-items: stretch; background: #dcdcdc; line-height: 14px; overflow: hidden; }
.tab { flex: none; padding: 0 11px 0 3px; white-space: nowrap; clip-path: polygon(0 0, calc(100% - 9px) 0, 100% 100%, 0 100%); margin-left: 1px; font-size: 9.5px; letter-spacing: -1.6px; }
.tab.kj { letter-spacing: 2px; font-size: 10px; padding: 0 9px 0 3px; }
.tab.act { background: #e6e6e6; color: #222; border-left: 1px solid #fff; }
.tab.off { background: #8a8a8a; color: #444; }
.diamond { font-style: normal; font-size: 7px; margin-right: 2px; letter-spacing: 0; }
.tabfill { flex: 1; min-width: 0; background: #6e6e6e; clip-path: polygon(0 0, 100% 0, calc(100% - 13px) 100%, 10px 100%); margin-left: -9px; }
.tabmenu { flex: none; width: 16px; display: flex; align-items: flex-end; justify-content: center; }

/* Tools */
.tools { left: 34px; top: 51px; width: 55px; height: 388px; border-left: 1px solid #888; }
.tool-logo { flex: none; height: 22px; }
.tool-logo svg { display: block; }
.tgroup { flex: none; display: grid; grid-template-columns: 21px 21px; justify-content: center; grid-auto-rows: 1fr; margin: 0 1px; padding-top: 2px; border-bottom: 1px solid #888; box-shadow: 0 1px 0 #f0f0f0; }
.g1 { height: 42px; padding-top: 4px; }
.g2 { height: 59px; }
.g3 { height: 41px; }
.g4 { height: 23px; }
.g5 { height: 57px; }
.g6 { height: 39px; }
.t { position: relative; display: flex; align-items: center; justify-content: center; }
.t svg { width: 16px; height: 16px; }
.t.on { background: #fff; border: 1px solid; border-color: #333 #fff #fff #333; outline: 1px solid #777; outline-offset: -1px; }
.t.fly::after { content: ""; position: absolute; right: 1px; bottom: 1px; width: 0; height: 0; border-left: 3px solid transparent; border-bottom: 3px solid #222; }
.t-type { font: 700 17px/1 "Liberation Serif", serif; color: #111; }
.colorbox { flex: none; position: relative; height: 47px; margin: 0 1px; border-bottom: 1px solid #888; }
.cb-fill { position: absolute; left: 7px; top: 6px; width: 25px; height: 25px; background: #fff; border: 1px solid #222; }
.cb-stroke { position: absolute; left: 18px; top: 18px; width: 26px; height: 26px; background: #000; border: 1px solid #ccc; outline: 1px solid #333; display: flex; align-items: center; justify-content: center; }
.cb-stroke b { width: 13px; height: 13px; background: #c8c8c8; border: 1px solid #eee; }
.cb-swap { position: absolute; left: 36px; top: 5px; }
.cb-def { position: absolute; left: 8px; top: 33px; width: 8px; height: 8px; background: #fff; border: 1px solid #111; }
.cb-def b { position: absolute; left: 3px; top: 3px; width: 6px; height: 6px; background: #333; border: 1px solid #fff; }
.tmodes { flex: none; display: flex; justify-content: center; gap: 1px; height: 20px; align-items: center; margin: 0 1px; border-bottom: 1px solid #888; }
.tmodes-last { border-bottom: 0; height: 22px; }
.tm { width: 14px; height: 14px; display: flex; align-items: center; justify-content: center; }
.tm.on { outline: 1px solid #777; background: #eee; }
.tm b { display: block; }
.m-sq { width: 10px; height: 10px; background: #111; border: 3px solid #111; box-shadow: inset 0 0 0 1px #666; }
.m-grad { width: 10px; height: 10px; background: linear-gradient(90deg, #eee, #111); border: 1px solid #333; }
.m-screen { width: 11px; height: 10px; background: #777; border: 1px solid #222; }
.m-btn { width: 12px; height: 11px; background: #777; border: 1px solid #333; border-radius: 2px; }

/* Pathfinder */
.pathfinder { left: 35px; top: 476px; width: 184px; height: 99px; }
.pf-body { flex: 1; padding: 2px 0 0 3px; }
.pf-lbl { line-height: 12px; font-size: 10px; letter-spacing: -.8px; }
.pf-lbl2 { margin-top: 6px; font-size: 9.5px; letter-spacing: -2.1px; }
.pf-row { display: flex; align-items: center; height: 16px; position: relative; }
.pf-row1 svg { width: 14px; height: 14px; flex: none; }
.pf-row1 svg:nth-child(1) { margin-left: 7px; }
.pf-row1 svg:nth-child(2) { margin-left: 14px; }
.pf-row1 svg:nth-child(3) { margin-left: 15px; }
.pf-row1 svg:nth-child(4) { margin-left: 14px; }
.pf-btn { margin-left: 10px; width: 61px; height: 16px; display: flex; align-items: center; justify-content: center; color: #777; font-size: 10px; background: #dcdcdc; border: 1px solid; border-color: #fff #444 #444 #fff; }
.pf-row2 svg { width: 16px; height: 16px; flex: none; margin-left: 13px; }
.pf-row2 svg:nth-child(1) { margin-left: 6px; }
.pf-row2 svg:nth-child(5) { margin-left: 16px; }
.pf-row2 svg:nth-child(6) { margin-left: 12px; }

/* Colour */
.color { left: 982px; top: 53px; width: 182px; height: 260px; }
.color-body { flex: none; height: 66px; display: flex; }
.color-left { flex: none; width: 39px; position: relative; }
.cl-fill { position: absolute; left: 5px; top: 6px; width: 16px; height: 15px; background: #fff; border: 1px solid #222; }
.cl-stroke { position: absolute; left: 13px; top: 14px; width: 17px; height: 17px; background: #000; display: flex; align-items: center; justify-content: center; }
.cl-stroke b { width: 6px; height: 6px; background: #ddd; }
.cl-cube { position: absolute; left: 5px; top: 35px; }
.cl-black { position: absolute; left: 18px; top: 34px; width: 12px; height: 12px; background: #000; }
.sliders { flex: 1; display: flex; flex-direction: column; padding-top: 1px; }
.srow { display: flex; align-items: center; height: 16px; }
.srow b { width: 8px; font: 700 10.5px/1 "Liberation Sans", sans-serif; color: #333; text-align: center; }
.track { position: relative; width: 89px; height: 5px; background: #000; }
.tri { position: absolute; top: 5px; width: 0; height: 0; border-left: 4px solid transparent; border-right: 4px solid transparent; border-bottom: 5px solid #888; }
.tri-c { left: 79px; } .tri-m { left: 74px; } .tri-y { left: 75px; } .tri-k { left: 67px; }
.num { width: 28px; height: 14px; margin-left: 5px; padding-left: 3px; background: #fff; border: 1px solid; border-color: #444 #eee #eee #444; font: 9.5px/12px "Liberation Sans", sans-serif; color: #222; }
.srow em { width: 12px; text-align: center; font: 700 10px/1 "Liberation Sans", sans-serif; color: #333; font-style: normal; }
.spectrum { flex: none; height: 16px; margin: 0 3px; display: flex; }
.spec-none { width: 14px; height: 16px; flex: none; }
.spec-bar { flex: 1; background: linear-gradient(180deg, #000 0, transparent 35%, transparent 50%, #000 100%), linear-gradient(90deg, #f00 0, #ff0 18%, #0a0 35%, #0cf 55%, #00f 70%, #808 88%, #e01030 100%); }
.spec-wb { width: 13px; flex: none; background: linear-gradient(180deg, #fff 50%, #000 50%); }
.tabs2 { border-top: 2px solid #333; margin-top: 4px; height: 18px; }
.swatches { flex: 1; display: flex; min-height: 0; }
.sw-grid { flex: none; display: block; }
.pscroll { flex: none; width: 13px; display: flex; flex-direction: column; background: #eee; }
.psb { flex: none; height: 14px; display: flex; align-items: center; justify-content: center; background: #dcdcdc; border: 1px solid; border-color: #fff #777 #777 #fff; }
.psthumb { flex: none; height: 14px; background: #dcdcdc; border: 1px solid; border-color: #fff #777 #777 #fff; }
.psgap { flex: 1; }

.hidden-panel { left: 990px; top: 258px; width: 175px; height: 122px; }

/* Appearance */
.appearance { left: 972px; top: 243px; width: 185px; height: 152px; }
.list-wrap { flex: 1; min-height: 0; display: flex; border-top: 1px solid #fff; }
.ap-list { flex: 1; }
.ap-wrap .pscroll, .ly-wrap .pscroll { width: 14px; }
.ap-row { display: flex; align-items: center; font-size: 10px; }
.ap-head { height: 18px; border-bottom: 1px solid #444; padding-left: 3px; gap: 4px; }
.ap-head b { font-size: 10.5px; font-weight: 700; }
.ap-box { width: 13px; height: 13px; background: #fff; border: 1px solid #555; }
.ap-sub { height: 18px; padding-left: 20px; background: #d2d2d2; border-bottom: 1px solid #eee; }
.ap-last { height: 17px; border-bottom: 1px solid #333; }
.ap-k { width: 36px; }
.ap-sw { width: 12px; height: 12px; background: #fff; border: 2px solid #333; box-shadow: 0 0 0 1px #aaa; }
.ap-black { background: #000; }
.ap-v { margin-left: 10px; font-family: "Liberation Sans", sans-serif; font-size: 10.5px; }
.pfoot { flex: none; height: 15px; display: flex; align-items: center; border-top: 1px solid #aaa; background: #dcdcdc; position: relative; }
.ap-f1 { margin-left: 28px; width: 26px; height: 13px; display: flex; align-items: center; justify-content: center; background: #eee; border: 1px solid #444; }
.ap-f2 { margin-left: 14px; } .ap-f3 { margin-left: 11px; } .ap-f4 { margin-left: 14px; } .ap-f5 { margin-left: 17px; } .ap-f6 { margin-left: auto; margin-right: 2px; }

/* Layers */
.layers { left: 972px; top: 394px; width: 185px; height: 105px; border-top: 2px solid #222; padding-top: 1px; }
.layers .ptabs { height: 13px; line-height: 12px; }
.ly-list { flex: 1; padding-top: 2px; }
.ly-row { display: flex; height: 16px; border-bottom: 1px solid #222; }
.ly-eye { width: 20px; display: flex; align-items: center; justify-content: center; }
.ly-lock { width: 16px; margin: 1px; background: #dcdcdc; border: 1px solid #aaa; }
.ly-arrow { width: 11px; display: flex; align-items: center; justify-content: center; border-left: 1px solid #555; }
.ly-main { flex: 1; display: flex; align-items: center; gap: 4px; padding-left: 5px; background: #0a5be8; position: relative; color: #fff; }
.ly-main b { font: 700 10.5px/1 "Liberation Sans", sans-serif; color: #dfe8ff; }
.ly-dot { position: absolute; right: 11px; top: 4px; width: 8px; height: 8px; border-radius: 50%; background: #0a45b0; border: 1px solid #041f66; }
.ly-count { margin-left: 8px; font-size: 10px; width: 55px; white-space: nowrap; letter-spacing: -1.2px; }
.ly-f1 { margin-left: 3px; } .ly-f2 { margin-left: 12px; } .ly-f3 { margin-left: 15px; } .ly-f4 { margin-left: 17px; } .ly-f5 { margin-left: auto; margin-right: 2px; }

/* Status bar */
.statusbar { flex: none; height: 16px; display: flex; align-items: stretch; background: #dcdcdc; border-bottom: 2px solid #333; font-size: 10px; overflow: hidden; }
.zoomval { width: 38px; margin-left: 1px; padding-left: 2px; background: #f2f2f2; border: 1px solid; border-color: #555 #fff #fff #555; font: 9px/12px "Liberation Sans", sans-serif; }
.zoomdrop { width: 13px; margin-left: 1px; display: flex; align-items: center; justify-content: center; background: #dcdcdc; border-right: 1px solid #555; }
.st-icon { margin-left: 4px; align-self: center; flex: none; }
.st-text { margin-left: 44px; width: 90px; line-height: 14px; font-size: 9.5px; letter-spacing: -.6px; color: #222; }
.st-arrow { align-self: center; width: 0; height: 0; border-left: 5px solid #111; border-top: 4px solid transparent; border-bottom: 4px solid transparent; margin-right: 5px; }
.hbtn { width: 14px; display: flex; align-items: center; justify-content: center; background: #dcdcdc; border: 1px solid; border-color: #fff #444 #444 #fff; }
.htrack { flex: 1; position: relative; background: repeating-conic-gradient(#fff 0 25%, #dedede 0 50%) 0 0 / 2px 2px; }
.hthumb { position: absolute; left: 467px; top: 0; bottom: 0; width: 14px; background: #dcdcdc; border: 1px solid; border-color: #fff #444 #444 #fff; }
.corner { width: 14px; background: #dcdcdc; }
```
